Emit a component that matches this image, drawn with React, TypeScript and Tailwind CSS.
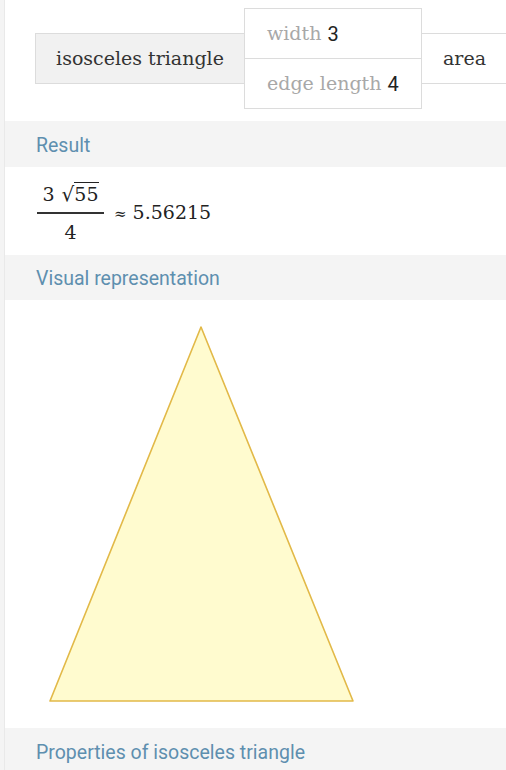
export default function App() {
  const serif = { fontFamily: '"DejaVu Serif", "Liberation Serif", serif' };
  const sans = { fontFamily: 'Roboto, "Liberation Sans", sans-serif' };

  return (
    <div className="w-[506px] h-[770px] overflow-hidden bg-[#f4f4f4] pl-[4px]">
      <div className="border-l border-[#e9e9e9]">
        {/* input interpretation */}
        <div className="h-[121px] bg-white flex items-center pl-[30px] pb-[4px]" style={serif}>
          <div className="h-[51px] w-[209px] bg-[#f1f1f1] border border-[#dcdcdc] border-r-0 flex items-center justify-center text-[19px] text-[#333]">
            isosceles triangle
          </div>
          <div className="w-[178px] border border-[#dcdcdc] flex flex-col">
            <div className="h-[50px] flex items-center pl-[22px] text-[19px] text-[#a8a8a8] border-b border-[#dcdcdc]">
              width<span className="ml-[6px] text-[#222] text-[20px]" style={sans}>3</span>
            </div>
            <div className="h-[49px] flex items-center pl-[22px] text-[19px] text-[#a8a8a8]">
              edge length<span className="ml-[6px] text-[#222] text-[20px]" style={sans}>4</span>
            </div>
          </div>
          <div className="h-[51px] flex-1 border-y border-[#dcdcdc] flex items-center pl-[21px] text-[19px] text-[#333]">
            area
          </div>
        </div>

        {/* Result */}
        <div className="h-[46px] flex items-center pl-[31px] pt-[3px] text-[19.5px] text-[#5e8faf]" style={sans}>
          Result
        </div>
        <div className="h-[88px] bg-white flex items-center pl-[32px]" style={serif}>
          <div className="flex flex-col items-center text-[19px] text-[#222] pt-[2px]">
            <div className="flex items-end px-[1px] leading-none">
              <span>3</span>
              <span className="ml-[7px] text-[20px]">√</span>
              <span className="border-t-[1.5px] border-[#222] leading-none pt-[2px]">55</span>
            </div>
            <div className="w-[67px] h-[1.5px] bg-[#333] mt-[8px] mb-[9px]" />
            <div className="leading-none">4</div>
          </div>
          <span className="ml-[10px] text-[19px] text-[#222] mt-[3px]">
            <span className="text-[15px]">≈</span> 5.56215
          </span>
        </div>

        {/* Visual representation */}
        <div className="h-[45px] flex items-center pl-[31px] pt-[2px] text-[19.5px] text-[#5e8faf]" style={sans}>
          Visual representation
        </div>
        <div className="h-[428px] bg-white">
          <svg width="502" height="428" viewBox="0 0 502 428">
            <polygon
              points="196,27 45,401 348,401"
              fill="#fffbcf"
              stroke="#e2b948"
              strokeWidth="1.6"
              strokeLinejoin="round"
            />
          </svg>
        </div>

        {/* Properties */}
        <div className="h-[42px] flex items-center pl-[31px] pt-[7px] text-[19.5px] text-[#5e8faf]" style={sans}>
          Properties of isosceles triangle
        </div>
      </div>
    </div>
  );
}
